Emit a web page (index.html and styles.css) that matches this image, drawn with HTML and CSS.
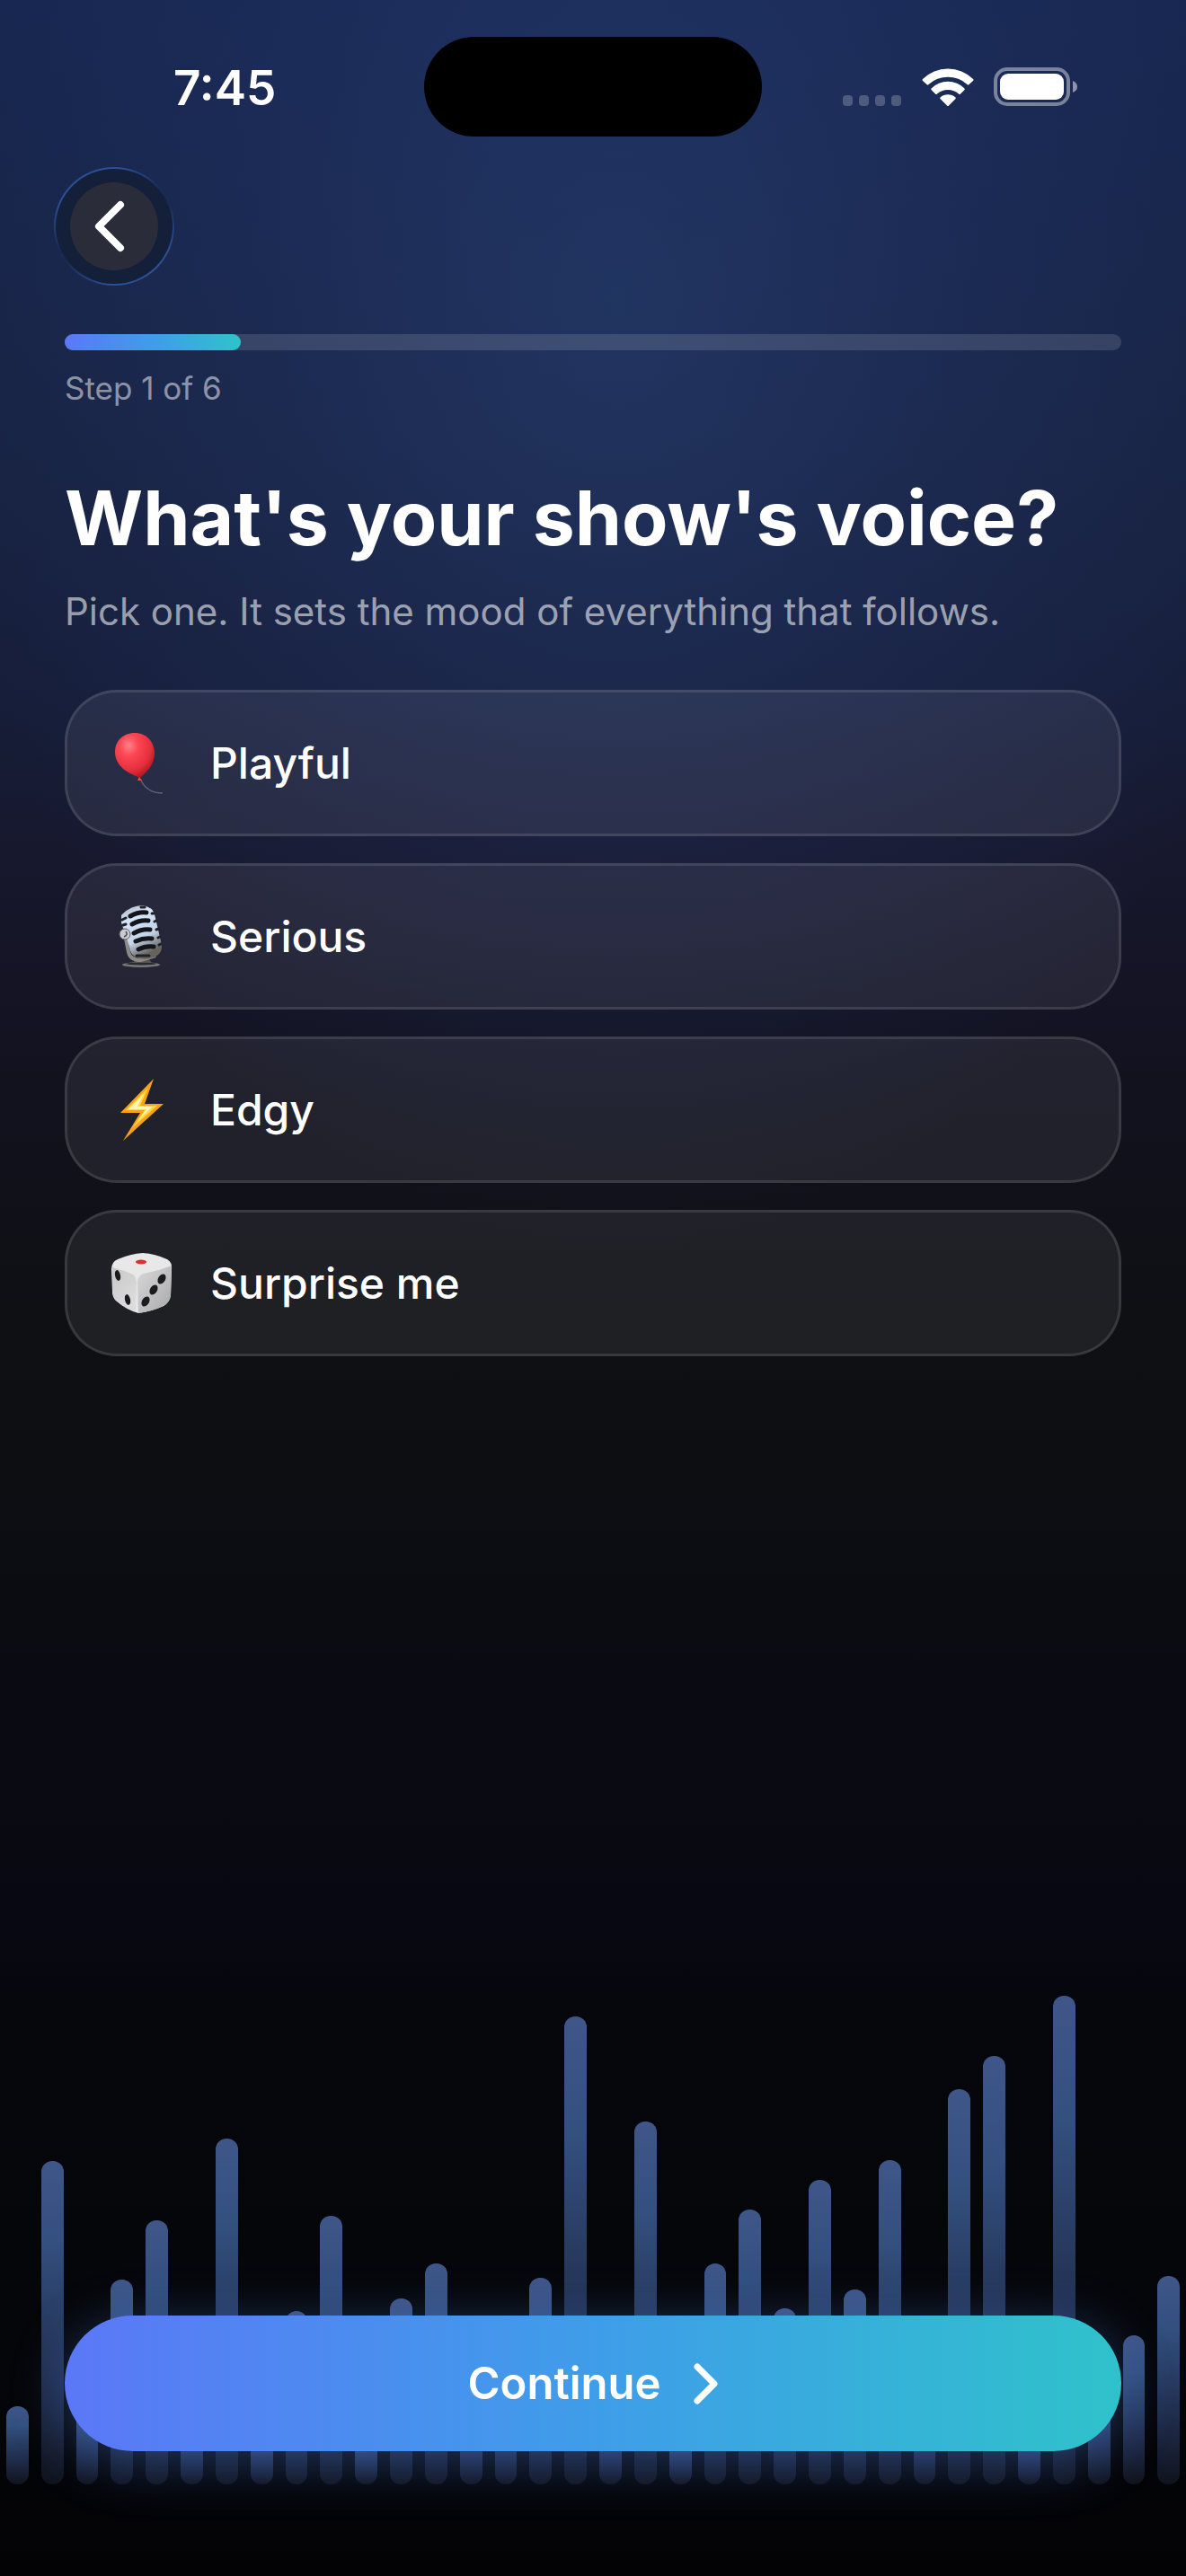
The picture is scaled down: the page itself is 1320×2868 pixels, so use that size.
FILE: index.html
```html
<!DOCTYPE html>
<html lang="en">
<head>
  <meta charset="UTF-8">
  <meta name="viewport" content="width=device-width, initial-scale=1">
  <title>Show Setup</title>
  <link rel="stylesheet" href="styles.css">
</head>
<body>
  <div class="screen">
    <!-- Status bar -->
    <div class="status-bar">
      <div class="status-time">7:45</div>
      <div class="island"></div>
      <div class="status-icons">
        <svg class="icon-cell" viewBox="0 0 66 12">
          <rect x="0" y="0" width="11" height="12" rx="4"/>
          <rect x="18" y="0" width="11" height="12" rx="4"/>
          <rect x="36" y="0" width="11" height="12" rx="4"/>
          <rect x="54" y="0" width="11" height="12" rx="4"/>
        </svg>
        <svg class="icon-wifi" viewBox="0 0 58 42">
          <path d="M1 12 A40 40 0 0 1 57 12 Q58 13 57 14 L52.500 18 Q51.500 19 50.500 18 A32 32 0 0 0 7.500 18 Q6.500 19 5.500 18 L1 14 Q0 13 1 12Z"/>
          <path d="M10.500 22.500 A26 26 0 0 1 47.500 22.500 Q48 23.500 47.500 24 L43 28.500 Q42 29.500 41 28.500 A18 18 0 0 0 17 28.500 Q16 29.500 15 28.500 L10.500 24 Q10 23.500 10.500 22.500Z"/>
          <path d="M20.500 32.500 A13 13 0 0 1 37.500 32.500 Q38 33.500 37.500 34 L30 41.500 Q29 42.500 28 41.500 L20.500 34 Q20 33.500 20.500 32.500Z"/>
        </svg>
        <svg class="icon-battery" viewBox="0 0 94 43">
          <rect x="2" y="2" width="81" height="39" rx="13" fill="none" stroke="#fff" stroke-opacity="0.42" stroke-width="4"/>
          <rect x="7" y="7" width="71" height="29" rx="9" fill="#fff"/>
          <path d="M88 15 Q93 17 93 21.500 Q93 26 88 28Z" fill="#fff" fill-opacity="0.5"/>
        </svg>
      </div>
    </div>

    <!-- Header with back button and progress -->
    <header class="header">
      <button class="back-btn" type="button" aria-label="Back">
        <span class="back-inner">
          <svg class="icon-back" viewBox="0 0 34 58"><path d="M29 5 L5 29 L29 53"/></svg>
        </span>
      </button>
      <div class="progress"><div class="progress-fill" style="width: 16.667%"></div></div>
      <div class="step">Step 1 of 6</div>
    </header>

    <!-- Question -->
    <main class="content">
      <h1>What's your show's voice?</h1>
      <p class="subtitle">Pick one. It sets the mood of everything that follows.</p>
      <div class="options">
        <button class="option" type="button">
          <svg class="emoji" viewBox="0 0 72 72">
            <defs>
              <radialGradient id="balloon" cx="0.35" cy="0.28" r="0.8">
                <stop offset="0" stop-color="#ff8288"/>
                <stop offset="0.3" stop-color="#fb4653"/>
                <stop offset="0.7" stop-color="#e62f3c"/>
                <stop offset="1" stop-color="#9f141d"/>
              </radialGradient>
            </defs>
            <path d="M34 55 C38 63 46 69 58 69" fill="none" stroke="#5d617c" stroke-width="1.500"/>
            <path d="M27 2 C40 2 49 12 49 25 C49 37 41 45 33 52 C19 47 5 39 5 23 C5 11 14 2 27 2Z" fill="url(#balloon)"/>
            <path d="M32 51 L35 55 L30 55Z" fill="#f04a52"/>
          </svg>
          <span>Playful</span>
        </button>
        <button class="option" type="button">
          <svg class="emoji" viewBox="0 0 72 72">
            <defs>
              <linearGradient id="mic" x1="0" y1="0" x2="0.4" y2="1">
                <stop offset="0" stop-color="#a9b0b8"/>
                <stop offset="0.3" stop-color="#d6e6fa"/>
                <stop offset="0.7" stop-color="#c4d3e6"/>
                <stop offset="1" stop-color="#66635f"/>
              </linearGradient>
            </defs>
            <ellipse cx="34" cy="67" rx="21" ry="3" fill="#77777a"/>
            <ellipse cx="34" cy="66" rx="17" ry="1.500" fill="#2b2b2f"/>
            <path d="M28 60 H42 L46 65 H25Z" fill="#55524f"/>
            <path d="M16 33 L20 53 Q22 62 34 62 L50 57" fill="none" stroke="#8d8a86" stroke-width="4"/>
            <path d="M12 12 Q22 1 36 1 Q47 3 49 11 L57 45 Q58 55 48 59 Q36 63 27 58 Q22 55 21 47 L12 20Z" fill="url(#mic)"/>
            <g stroke="#15161c" stroke-width="5" stroke-linecap="round" fill="none">
              <path d="M22 13 Q31 8 40 9"/>
              <path d="M24 22 Q33 17 42 18"/>
              <path d="M26 32 Q35 27 44 28"/>
              <path d="M28 41 Q37 37 46 38"/>
              <path d="M31 50 Q39 46 48 47"/>
            </g>
            <g stroke="#202127" stroke-width="3" stroke-linecap="round">
              <path d="M13 17 L17 15 M14 23 L17 22 M46 10 L48 10 M49 19 L51 18 M51 28 L54 27 M53 37 L55 36 M54 45 L56 44 M34 3 L38 3 M29 57 L43 57"/>
            </g>
            <circle cx="16" cy="33" r="6" fill="#c9cbd0" stroke="#595a5f"/>
            <path d="M17 30 Q20 34 15 36" fill="none" stroke="#4c4d52" stroke-width="1.500"/>
          </svg>
          <span>Serious</span>
        </button>
        <button class="option" type="button">
          <svg class="emoji" viewBox="0 0 72 72">
            <path d="M48 1 L11 39 L33 39 L14 70 L59 29 L38 29Z" fill="#f9a11b"/>
            <path d="M42 11 L17 36 L38 36 L24 56 L52 31 L33 31Z" fill="#ffd83c"/>
            <path d="M37 18 L20 35 L40 35 L31 47 L47 32 L30 32Z" fill="#fff5b5"/>
          </svg>
          <span>Edgy</span>
        </button>
        <button class="option" type="button">
          <svg class="emoji" viewBox="0 0 72 72">
            <defs>
              <linearGradient id="dieLeft" x1="0" y1="0" x2="0.6" y2="1">
                <stop offset="0" stop-color="#c8c8ca"/>
                <stop offset="1" stop-color="#dcdcdc"/>
              </linearGradient>
              <linearGradient id="dieRight" x1="0" y1="0" x2="1" y2="1">
                <stop offset="0" stop-color="#d9d9da"/>
                <stop offset="1" stop-color="#a9a9ab"/>
              </linearGradient>
            </defs>
            <path d="M8 9 Q22 3 36 2 Q50 3 63 9 Q69 12 68 21 L67 49 Q66 57 59 61 Q46 67 31 69 Q17 65 6 55 Q2 51 2 44 L1 20 Q1 12 8 9Z" fill="#e8e8e8"/>
            <path d="M2 18 Q14 21 25 26 Q29 29 29 36 L28 67 Q16 63 6 55 Q2 51 2 44Z" fill="url(#dieLeft)"/>
            <path d="M30 35 Q30 28 36 25 Q53 22 68 16 L67 49 Q66 57 59 61 Q46 67 31 69Z" fill="url(#dieRight)"/>
            <ellipse cx="34" cy="12" rx="6" ry="2.500" fill="#dc3030"/>
            <g fill="#1c1c1e">
              <ellipse cx="8" cy="27" rx="3" ry="6" transform="rotate(-12 8 27)"/>
              <ellipse cx="19" cy="54" rx="3" ry="6" transform="rotate(-12 19 54)"/>
              <ellipse cx="57" cy="31" rx="4" ry="6" transform="rotate(30 57 31)"/>
              <ellipse cx="48" cy="43" rx="4" ry="6" transform="rotate(30 48 43)"/>
              <ellipse cx="39" cy="56" rx="4" ry="6" transform="rotate(30 39 56)"/>
            </g>
          </svg>
          <span>Surprise me</span>
        </button>
      </div>
    </main>

    <!-- Waveform with the continue button over it -->
    <footer class="footer">
      <div class="wave">
        <i style="height: 87px"></i>
        <i style="height: 360px"></i>
        <i style="height: 100px"></i>
        <i style="height: 228px"></i>
        <i style="height: 294px"></i>
        <i style="height: 100px"></i>
        <i style="height: 385px"></i>
        <i style="height: 80px"></i>
        <i style="height: 193px"></i>
        <i style="height: 299px"></i>
        <i style="height: 75px"></i>
        <i style="height: 207px"></i>
        <i style="height: 246px"></i>
        <i style="height: 110px"></i>
        <i style="height: 120px"></i>
        <i style="height: 230px"></i>
        <i style="height: 521px"></i>
        <i style="height: 100px"></i>
        <i style="height: 404px"></i>
        <i style="height: 75px"></i>
        <i style="height: 246px"></i>
        <i style="height: 306px"></i>
        <i style="height: 196px"></i>
        <i style="height: 339px"></i>
        <i style="height: 217px"></i>
        <i style="height: 361px"></i>
        <i style="height: 130px"></i>
        <i style="height: 440px"></i>
        <i style="height: 477px"></i>
        <i style="height: 85px"></i>
        <i style="height: 544px"></i>
        <i style="height: 120px"></i>
        <i style="height: 166px"></i>
        <i style="height: 232px"></i>
      </div>
      <button class="continue-btn" type="button">
        Continue
        <svg class="icon-next" viewBox="0 0 28 46"><path d="M4 4 L23 23 L4 42"/></svg>
      </button>
    </footer>
  </div>
</body>
</html>
```
FILE: styles.css
```css
* {
  box-sizing: border-box;
}
body {
  margin: 0;
  background-color: #030306;
  color: #ffffff;
  font-family: Inter, "Liberation Sans", sans-serif;
}
button {
  font-family: inherit;
  color: inherit;
  border: none;
  cursor: pointer;
}
h1, p {
  margin: 0;
}
.screen {
  min-height: 100vh;
  display: flex;
  flex-direction: column;
  background:
    radial-gradient(ellipse 760px 1050px at 52% 340px, rgba(46, 76, 134, 0.42), rgba(46, 70, 134, 0.2) 50%, rgba(46, 60, 134, 0)),
    linear-gradient(180deg, #17264f 0, #182343 480px, #161e3a 760px, #17172c 980px, #121220 1180px, #0f1014 1450px, #0d0e12 1650px, #090a12 1950px, #070811 2150px, #06070c 2250px, #050609 2600px, #030306 2868px);
}
/* Status bar */
.status-bar {
  display: grid;
  grid-template-columns: 1fr 376px 1fr;
  align-items: center;
  padding-top: 41px;
}
.status-time {
  padding: 2px 0 0 193px;
  font-size: 53px;
  line-height: 60px;
  font-weight: 600;
}
.island {
  height: 111px;
  border-radius: 56px;
  background-color: #000000;
}
.status-icons {
  display: flex;
  align-items: flex-end;
  justify-content: flex-end;
  gap: 22px;
  padding-right: 120px;
}
.icon-cell {
  width: 66px;
  height: 12px;
  fill: rgba(255, 255, 255, 0.22);
}
.icon-wifi {
  width: 58px;
  height: 42px;
  fill: #ffffff;
}
.icon-battery {
  width: 94px;
  height: 43px;
}
/* Header */
.header {
  padding: 34px 72px 0;
}
.back-btn {
  display: flex;
  width: 134px;
  height: 132px;
  margin-left: -12px;
  padding: 0;
  border-radius: 50%;
  border: 2px solid transparent;
  background:
    linear-gradient(#141f3a, #141f3a) padding-box,
    linear-gradient(150deg, #2c4f96 20%, #1a2b52 45%, #1a2b52 55%, #2c4f96 80%) border-box;
}
.back-inner {
  display: flex;
  align-items: center;
  justify-content: center;
  width: 98px;
  height: 98px;
  margin: auto;
  border-radius: 50%;
  background-color: #2a2d39;
}
.icon-back {
  width: 34px;
  height: 58px;
  margin-right: 10px;
  fill: none;
  stroke: #ffffff;
  stroke-width: 8;
  stroke-linecap: round;
  stroke-linejoin: round;
}
.progress {
  height: 18px;
  margin-top: 54px;
  border-radius: 9px;
  background-color: rgba(255, 255, 255, 0.13);
}
.progress-fill {
  height: 100%;
  border-radius: 9px;
  background: linear-gradient(90deg, #5b78f7, #3f9de9 50%, #2fc2cb);
}
.step {
  margin-top: 20px;
  font-size: 35px;
  line-height: 44px;
  color: rgba(255, 255, 255, 0.5);
}
/* Question */
.content {
  flex: 1;
  padding: 68px 72px 0;
}
h1 {
  font-size: 84px;
  line-height: 110px;
  font-weight: 700;
}
.subtitle {
  margin-top: 23px;
  font-size: 42px;
  line-height: 52px;
  color: rgba(255, 255, 255, 0.58);
}
.options {
  display: flex;
  flex-direction: column;
  gap: 30px;
  margin-top: 61px;
}
.option {
  display: flex;
  align-items: center;
  gap: 39px;
  height: 163px;
  padding: 0 48px;
  border: 3px solid rgba(255, 255, 255, 0.11);
  border-radius: 58px;
  background-color: rgba(255, 255, 255, 0.07);
  font-size: 48px;
  line-height: 58px;
  font-weight: 500;
  text-align: left;
}
.emoji {
  width: 72px;
  height: 72px;
}
/* Footer, wave and button share one grid cell */
.footer {
  display: grid;
  align-items: end;
}
.wave,
.continue-btn {
  grid-area: 1 / 1;
}
.wave {
  display: flex;
  align-items: flex-end;
  gap: 14px;
  padding: 0 7px;
  margin-bottom: 102px;
}
.wave i {
  flex: 1;
  border-radius: 12px;
  background: linear-gradient(180deg, #3f5689, #33507f 25%, #1f2b49 70%, #10131d);
}
.continue-btn {
  display: flex;
  align-items: center;
  justify-content: center;
  gap: 36px;
  height: 151px;
  margin: 0 72px 139px;
  border-radius: 76px;
  background: linear-gradient(90deg, #5b78f7, #3f9de9 50%, #2fc2cb);
  box-shadow: 0 12px 60px rgba(75, 125, 220, 0.42);
  font-size: 49px;
  line-height: 58px;
  font-weight: 600;
}
.icon-next {
  width: 28px;
  height: 46px;
  fill: none;
  stroke: #ffffff;
  stroke-width: 7;
  stroke-linecap: round;
  stroke-linejoin: round;
}
```
